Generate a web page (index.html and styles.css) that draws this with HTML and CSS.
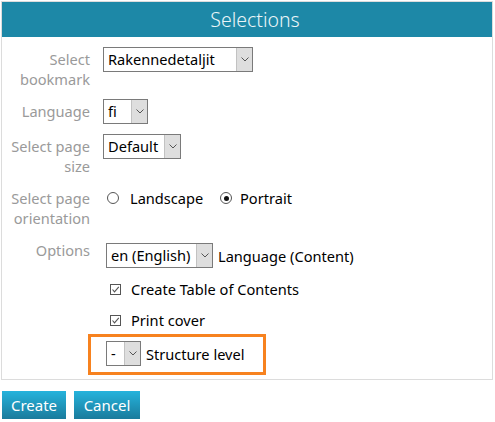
FILE: index.html
```html
<!DOCTYPE html>
<html>
<head>
<meta charset="utf-8">
<link rel="stylesheet" href="styles.css">
</head>
<body>
<div class="panel">
  <div class="header">Selections</div>
  <div class="form">
    <div class="label">Select<br>bookmark</div>
    <div class="field">
      <span class="select w-bookmark"><span class="val">Rakennedetaljit</span><span class="arrow"><svg width="8" height="5" viewBox="0 0 8 5"><polyline points="0.5,0.5 4,4 7.5,0.5" fill="none" stroke="#555" stroke-width="1"/></svg></span></span>
    </div>

    <div class="label">Language</div>
    <div class="field">
      <span class="select w-lang"><span class="val">fi</span><span class="arrow"><svg width="8" height="5" viewBox="0 0 8 5"><polyline points="0.5,0.5 4,4 7.5,0.5" fill="none" stroke="#555" stroke-width="1"/></svg></span></span>
    </div>

    <div class="label">Select page<br>size</div>
    <div class="field">
      <span class="select w-size"><span class="val">Default</span><span class="arrow"><svg width="8" height="5" viewBox="0 0 8 5"><polyline points="0.5,0.5 4,4 7.5,0.5" fill="none" stroke="#555" stroke-width="1"/></svg></span></span>
    </div>

    <div class="label">Select page<br>orientation</div>
    <div class="field radios">
      <span class="radio-opt first"><span class="radio"></span><span>Landscape</span></span>
      <span class="radio-opt"><span class="radio checked"></span><span>Portrait</span></span>
    </div>

    <div class="label">Options</div>
    <div class="field options">
      <div class="opt-line">
        <span class="select w-content"><span class="val">en (English)</span><span class="arrow"><svg width="8" height="5" viewBox="0 0 8 5"><polyline points="0.5,0.5 4,4 7.5,0.5" fill="none" stroke="#555" stroke-width="1"/></svg></span></span>
        <span class="after">Language (Content)</span>
      </div>
      <div class="check-line">
        <span class="checkbox"><svg width="9" height="9" viewBox="0 0 9 9"><polyline points="1.5,4.5 3.5,6.8 7.8,1.8" fill="none" stroke="#555" stroke-width="1.1"/></svg></span>
        <span>Create Table of Contents</span>
      </div>
      <div class="check-line">
        <span class="checkbox"><svg width="9" height="9" viewBox="0 0 9 9"><polyline points="1.5,4.5 3.5,6.8 7.8,1.8" fill="none" stroke="#555" stroke-width="1.1"/></svg></span>
        <span>Print cover</span>
      </div>
      <div class="opt-line struct">
        <span class="select w-struct"><span class="val">-</span><span class="arrow"><svg width="8" height="5" viewBox="0 0 8 5"><polyline points="0.5,0.5 4,4 7.5,0.5" fill="none" stroke="#555" stroke-width="1"/></svg></span></span>
        <span class="after">Structure level</span>
        <span class="annot"></span>
      </div>
    </div>
  </div>
</div>
<div class="buttons">
  <button class="btn create">Create</button>
  <button class="btn cancel">Cancel</button>
</div>
</body>
</html>
```

FILE: styles.css
```css
html, body {
  margin: 0;
  padding: 0;
  background: #fff;
}

body {
  font-family: "Noto Sans", "Open Sans", sans-serif;
  font-size: 14.6px;
  color: #111;
}

.panel {
  margin: 1px 2px 0 1px;
  border: 1px solid #dcdcdc;
}

.header {
  height: 35px;
  background: #1d88a7;
  color: #eaf5f8;
  font-size: 19.5px;
  line-height: 35px;
  text-align: center;
  font-weight: 300;
  padding-left: 16px;
}

.form {
  display: grid;
  grid-template-columns: 88px 1fr;
  column-gap: 13px;
  row-gap: 10px;
  padding: 10px 0 13px 0;
}

.label {
  color: #9a9a9a;
  text-align: right;
  line-height: 20px;
  padding-top: 2px;
}

.field {
  line-height: 20px;
}

.select {
  display: inline-flex;
  align-items: stretch;
  box-sizing: border-box;
  height: 25px;
  border: 1px solid #7a7a7a;
  background: #fff;
  vertical-align: middle;
}

.select .val {
  flex: 1;
  padding-left: 4px;
  line-height: 23px;
  color: #000;
  white-space: nowrap;
  overflow: hidden;
}

.select .arrow {
  width: 16px;
  box-sizing: border-box;
  background: #dedede;
  border-left: 1px solid #c2c2c2;
  display: flex;
  align-items: center;
  justify-content: center;
}

.w-bookmark { width: 150px; }
.w-lang { width: 45px; }
.w-size { width: 78px; }
.w-content { width: 107px; }
.w-struct { width: 35px; }

.radios {
  display: flex;
  align-items: center;
  padding-top: 2px;
  height: 20px;
}

.radio-opt {
  display: inline-flex;
  align-items: center;
  color: #000;
}

.radio-opt.first {
  width: 117px;
}

.radio {
  width: 12px;
  height: 12px;
  box-sizing: border-box;
  border: 1px solid #555;
  border-radius: 50%;
  margin-left: 4px;
  margin-right: 11px;
  position: relative;
}

.radio-opt:not(.first) .radio {
  margin-left: 0;
  margin-right: 8px;
}

.radio.checked::after {
  content: "";
  position: absolute;
  left: 2.5px;
  top: 2.5px;
  width: 5px;
  height: 5px;
  border-radius: 50%;
  background: #111;
}

.options {
  padding-top: 5px;
  padding-left: 3px;
}

.opt-line {
  display: flex;
  align-items: center;
  height: 25px;
  color: #000;
}

.opt-line .after {
  margin-left: 5px;
}

.check-line {
  display: flex;
  align-items: center;
  height: 20px;
  margin-top: 11px;
  color: #000;
}

.checkbox {
  width: 11px;
  height: 11px;
  box-sizing: border-box;
  border: 1px solid #555;
  margin-left: 4px;
  margin-right: 10px;
  display: flex;
  align-items: center;
  justify-content: center;
}

.checkbox svg {
  display: block;
}

.struct {
  margin-top: 11px;
  position: relative;
}

.annot {
  position: absolute;
  left: -18px;
  top: -7px;
  width: 178px;
  height: 41px;
  box-sizing: border-box;
  border: 3px solid #f7821f;
}

.buttons {
  display: flex;
  gap: 8px;
  margin: 11px 0 0 2px;
}

.btn {
  height: 28px;
  padding: 0;
  border: none;
  background: linear-gradient(#25b3dc, #1a7b9c);
  color: #fff;
  font-family: "Noto Sans", "Open Sans", sans-serif;
  font-size: 15px;
  line-height: 28px;
  text-align: center;
  cursor: pointer;
}

.btn.create { width: 64px; }
.btn.cancel { width: 66px; }
```
